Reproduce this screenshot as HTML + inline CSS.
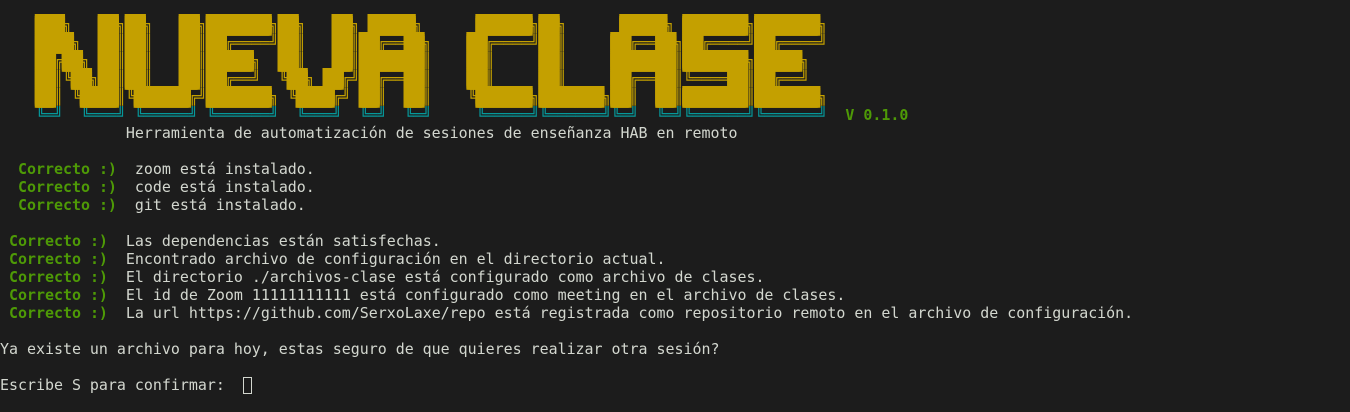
<!DOCTYPE html>
<html><head><meta charset="utf-8"><style>
html,body{margin:0;padding:0;background:#1c1c1c;width:1350px;height:412px;overflow:hidden}
pre{margin:0;position:absolute;left:0;font-family:"DejaVu Sans Mono","Liberation Mono",monospace;font-size:14.95px;line-height:18px;color:#d3d7cf;white-space:pre}
.g{color:#4e9a06;font-weight:bold}
.y{color:#c4a000}
.c{color:#06989a}
.blk{color:#c4a000;text-shadow:1px 0 0 #c4a000,2px 0 0 #c4a000,-1px 0 0 #c4a000,0 1px 0 #c4a000,0 2px 0 #c4a000,0 -1px 0 #c4a000,0 -2px 0 #c4a000,2px 2px 0 #c4a000,-1px -2px 0 #c4a000,2px -2px 0 #c4a000,-1px 2px 0 #c4a000}
.cur{display:inline-block;width:9px;height:17px;border:1px solid #d3d7cf;box-sizing:border-box;vertical-align:-4px}
</style></head><body>
<pre style="top:16px"><span class="y">    ███╗   ██╗██╗   ██╗███████╗██╗   ██╗ █████╗      ██████╗██╗      █████╗ ███████╗███████╗
    ████╗  ██║██║   ██║██╔════╝██║   ██║██╔══██╗    ██╔════╝██║     ██╔══██╗██╔════╝██╔════╝
    ██╔██╗ ██║██║   ██║█████╗  ██║   ██║███████║    ██║     ██║     ███████║███████╗█████╗  
    ██║╚██╗██║██║   ██║██╔══╝  ╚██╗ ██╔╝██╔══██║    ██║     ██║     ██╔══██║╚════██║██╔══╝  
    ██║ ╚████║╚██████╔╝███████╗ ╚████╔╝ ██║  ██║    ╚██████╗███████╗██║  ██║███████║███████╗</span>
<span class="c">    ╚═╝  ╚═══╝ ╚═════╝ ╚══════╝  ╚═══╝  ╚═╝  ╚═╝     ╚═════╝╚══════╝╚═╝  ╚═╝╚══════╝╚══════╝</span>  <span class="g">V 0.1.0</span>
              Herramienta de automatización de sesiones de enseñanza HAB en remoto

  <span class="g">Correcto :)</span>  zoom está instalado.
  <span class="g">Correcto :)</span>  code está instalado.
  <span class="g">Correcto :)</span>  git está instalado.

 <span class="g">Correcto :)</span>  Las dependencias están satisfechas.
 <span class="g">Correcto :)</span>  Encontrado archivo de configuración en el directorio actual.
 <span class="g">Correcto :)</span>  El directorio ./archivos-clase está configurado como archivo de clases.
 <span class="g">Correcto :)</span>  El id de Zoom 11111111111 está configurado como meeting en el archivo de clases.
 <span class="g">Correcto :)</span>  La url https://github.com/SerxoLaxe/repo está registrada como repositorio remoto en el archivo de configuración.

Ya existe un archivo para hoy, estas seguro de que quieres realizar otra sesión?

Escribe S para confirmar:  <span class="cur"></span></pre>
<pre class="blk" style="top:16px" aria-hidden="true">    ███    ██ ██    ██ ███████ ██    ██  █████       ██████ ██       █████  ███████ ███████ 
    ████   ██ ██    ██ ██      ██    ██ ██   ██     ██      ██      ██   ██ ██      ██      
    ██ ██  ██ ██    ██ █████   ██    ██ ███████     ██      ██      ███████ ███████ █████   
    ██  ██ ██ ██    ██ ██       ██  ██  ██   ██     ██      ██      ██   ██      ██ ██      
    ██   ████  ██████  ███████   ████   ██   ██      ██████ ███████ ██   ██ ███████ ███████ </pre>
</body></html>
